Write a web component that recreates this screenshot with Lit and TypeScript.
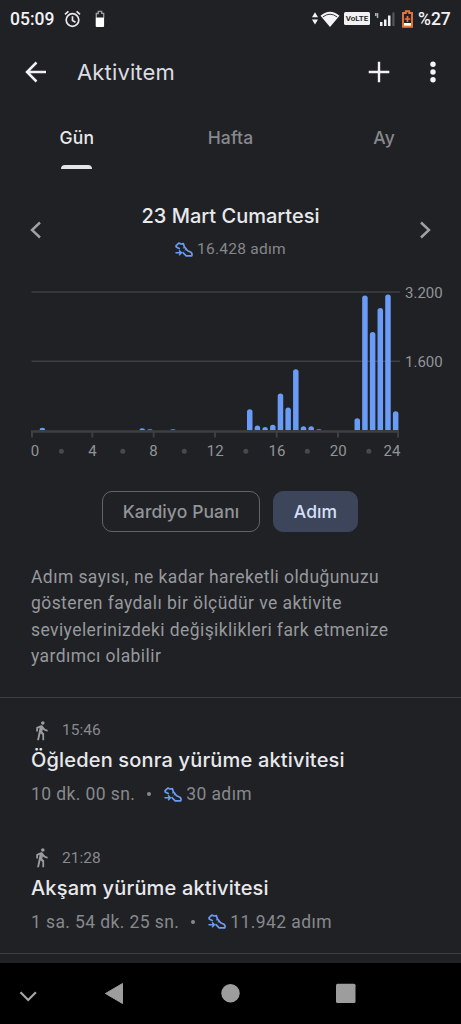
import { LitElement, html, css, svg } from "lit";
import { customElement, property } from "lit/decorators.js";

const stepsIcon = html`<svg viewBox="0 0 18 15" width="18" height="15" fill="none" stroke="#699bf7" stroke-width="1.7" stroke-linejoin="round" stroke-linecap="round">
  <path d="M4.200 6.600 1.200 5 1.100 3.600 3.800 1.100 6.200 2 8.400 1.700 9.400 4.900 12.600 8.800 15.900 10.200Q17.300 11.200 17 12.900L16.600 13.900H11.200L8 10.600"/>
  <path d="M1 10.800H6.200M4.500 8.900 6.400 10.800 4.500 12.700" stroke-width="1.500"/>
  <path d="M8.300 6 9.600 5.300M10 8 11.300 7.300" stroke-width="1"/>
</svg>`;

const walkIcon = html`<svg viewBox="0 0 24 24" width="21" height="21" fill="#9a9ca0"><path d="M13.500 5.500c1.100 0 2-.9 2-2s-.9-2-2-2-2 .9-2 2 .9 2 2 2zM9.800 8.900 7 23h2.100l1.800-8 2.100 2v6h2v-7.500l-2.100-2 .6-3C14.800 12 16.800 13 19 13v-2c-1.900 0-3.500-1-4.300-2.400l-1-1.600c-.4-.6-1-1-1.700-1-.3 0-.5.1-.8.1L6 8.300V13h2V9.600l1.800-.7"/></svg>`;

@customElement("status-bar")
class StatusBar extends LitElement {
  static styles = css`
    :host { display: flex; align-items: center; height: 37px; padding: 0 10px; color: #f2f2f4; font: 500 17.5px Roboto, sans-serif; }
    .time { width: 46px; white-space: nowrap; }
    .alarm { margin-left: 8px; }
    .cell { margin-left: 14px; }
    .grow { flex: 1; }
    .volte { width: 26px; height: 13px; margin: 0 5px 0 4px; border-radius: 1.5px; background: #f2f2f4; color: #222; font: 600 8px/13px Roboto, sans-serif; text-align: center; }
    .low { margin: 0 5px 0 7px; }
    .pct { width: 33px; white-space: nowrap; }
  `;
  render() {
    return html`
      <span class="time">05:09</span>
      <svg class="alarm" width="17" height="18" viewBox="0 0 17 18" fill="none" stroke="#e8e8ea" stroke-width="1.700"><circle cx="8.500" cy="10" r="6.300"/><path d="M8.500 6.200v4.300l3 1.700M1 4.400 4.400 1.300M16 4.400 12.600 1.300"/></svg>
      <svg class="cell" width="10" height="18" viewBox="0 0 10 18"><path d="M1.300 8V3.500h2V1.300h3.400v2h2V8" fill="none" stroke="#a0a0a2" stroke-width="1.300"/><rect x=".7" y="7.500" width="8.400" height="9.500" rx="1" fill="#fff"/></svg>
      <span class="grow"></span>
      <svg width="28" height="18" viewBox="0 0 28 18" fill="#f4f4f6"><path d="M0 7.200 3 2.200 6 7.200zM0 9.600h6L3 14.600z"/><path d="M8.500 5.800Q18 -2.400 27.500 5.800L18 17z"/><path d="M10.800 7Q18 1.400 25.200 7" fill="none" stroke="#3a3b40" stroke-width="1"/></svg>
      <span class="volte">VoLTE</span>
      <svg width="20" height="16" viewBox="0 0 20 16" fill="#f0f0f2"><path d="M0 2h1.500v3H0zM1.800 2h1.500v5H1.800z" opacity=".7"/><rect x="5" y="11" width="2.500" height="4"/><rect x="9" y="8.500" width="2.500" height="6.500"/><rect x="13" y="4.500" width="2.500" height="10.500"/><rect x="17.300" y="1.500" width="2.200" height="13.500" fill="#55565a"/></svg>
      <svg class="low" width="11" height="18" viewBox="0 0 11 18"><path d="M1 3h2.800V1.200h3.400V3H10v13.800H1z" fill="none" stroke="#e8743c" stroke-width="1.900"/><path d="M5.500 6v6M2.700 9h5.600" stroke="#e8743c" stroke-width="1.700"/><path d="M2 13h7v2.800H2z" fill="#fff"/></svg>
      <span class="pct">%27</span>`;
  }
}

@customElement("app-bar")
class AppBar extends LitElement {
  static styles = css`
    :host { display: flex; align-items: center; height: 70px; padding: 0 25px; }
    .title { flex: 1; margin-left: 30px; color: #dcdde0; font: 400 22px Inter, sans-serif; letter-spacing: .15px; }
    .plus { margin-right: 40px; }
  `;
  render() {
    return html`
      <svg width="22" height="22" viewBox="0 0 22 22" fill="none" stroke="#f1f1f3" stroke-width="2.500"><path d="M21 11H2.500M11.500 1.500 2 11l9.500 9.500"/></svg>
      <span class="title">Aktivitem</span>
      <svg class="plus" width="22" height="22" viewBox="0 0 22 22" stroke="#f1f1f3" stroke-width="2.400"><path d="M11 .7v20.600M.7 11h20.600"/></svg>
      <svg width="6" height="22" viewBox="0 0 6 22" fill="#f5f5f7"><circle cx="3" cy="3.200" r="2.700"/><circle cx="3" cy="11" r="2.700"/><circle cx="3" cy="18.800" r="2.700"/></svg>`;
  }
}

@customElement("range-tabs")
class RangeTabs extends LitElement {
  static styles = css`
    :host { display: grid; grid-template-columns: 1fr 1fr 1fr; height: 62px; color: #87898d; font: 500 17.5px/62px Inter, sans-serif; text-align: center; letter-spacing: .15px; }
    .tab { display: flex; flex-direction: column; align-items: center; height: 62px; }
    .label { height: 58px; }
    .on { color: #e8e9ec; }
    .mark { width: 31px; height: 4px; border-radius: 4px 4px 0 0; background: #e3e4e8; }
  `;
  render() {
    return html`
      <div class="tab on"><span class="label">Gün</span><span class="mark"></span></div>
      <div class="tab"><span class="label">Hafta</span></div>
      <div class="tab"><span class="label">Ay</span></div>`;
  }
}

@customElement("day-picker")
class DayPicker extends LitElement {
  static styles = css`
    :host { display: flex; align-items: center; justify-content: space-between; height: 62px; padding: 0 29px; margin-top: 30px; }
    .mid { display: flex; flex-direction: column; align-items: center; padding-top: 5px; }
    .day { height: 33px; color: #e8e9ec; font: 500 20px/28px Inter, sans-serif; white-space: nowrap; }
    .sum { display: flex; align-items: center; gap: 4px; height: 28px; color: #85878b; font: 400 15.5px/28px Roboto, sans-serif; letter-spacing: .25px; }
  `;
  render() {
    return html`
      <svg width="14" height="18" viewBox="0 0 14 18" fill="none" stroke="#a0a1a5" stroke-width="2.400"><path d="M11 1.500 3 9l8 7.500"/></svg>
      <div class="mid"><span class="day">23 Mart Cumartesi</span><span class="sum">${stepsIcon}<span>16.428 adım</span></span></div>
      <svg width="14" height="18" viewBox="0 0 14 18" fill="none" stroke="#a0a1a5" stroke-width="2.400"><path d="M3 1.500 11 9l-8 7.500"/></svg>`;
  }
}

// Each pair is a half-hour slot and the height of its bar.
const bars: [number, number][] = [
  [1, 2.4], [14, 2], [15, 1], [18, 1], [28, 21], [29, 4.8], [30, 3.2], [31, 5.4], [32, 36.8], [33, 22.8],
  [34, 61], [35, 4], [36, 4], [37, 1], [42, 12], [43, 134.7], [44, 98.3], [45, 122.3], [46, 135.7], [47, 19],
];
// Hour label, its centre, and the position of its tick.
const hours: [string, number, number][] = [
  ["0", 35, 32], ["4", 92.5, 92.3], ["8", 153.5, 153.7], ["12", 215.3, 215], ["16", 277, 276.7], ["20", 338.3, 338], ["24", 392, 398],
];
const dots = [61.4, 122.8, 184.3, 245.8, 307.3, 368.8];

@customElement("steps-chart")
class StepsChart extends LitElement {
  static styles = css`
    :host { display: block; height: 190px; margin-top: 19px; }
    svg { display: block; }
    text { font: 400 15px Roboto, sans-serif; fill: #929498; }
    .hour { text-anchor: middle; }
  `;
  render() {
    return html`<svg width="461" height="190" viewBox="0 280 461 190">
      <path d="M31.500 292H400M31.500 361.300H400" stroke="#3d3f43" stroke-width="1.500"/>
      ${bars.map(([i, h]) => {
        const x = 34.7 + 7.68 * i - 2.75;
        const r = Math.min(2.6, h);
        return svg`<path d="M${x} 430.200v${r - h}q0 ${-r} 2.750 ${-r}t2.750 ${r}v${h - r}z" fill="#699bf7"/>`;
      })}
      <path d="M31 431.500H399" stroke="#3d3f43" stroke-width="2.600"/>
      ${hours.map(([t, x, tick]) => svg`<path d="M${tick} 431v6.500" stroke="#3d3f43" stroke-width="2"/><text class="hour" x=${x} y="456.300">${t}</text>`)}
      ${dots.map((x) => svg`<circle cx=${x} cy="451.200" r="2.500" fill="#47494d"/>`)}
      <text x="405" y="297.700">3.200</text><text x="405" y="367">1.600</text>
    </svg>`;
  }
}

@customElement("activity-entry")
class ActivityEntry extends LitElement {
  @property() time = "";
  @property() name = "";
  @property() duration = "";
  @property() steps = "";
  static styles = css`
    :host { display: block; height: 127.5px; padding: 0 31px; box-sizing: border-box; white-space: nowrap; }
    .top { display: flex; align-items: center; height: 30px; gap: 10px; color: #87898d; font: 400 15.5px Roboto, sans-serif; }
    .name { color: #e8e9ec; font: 500 20px/30px Inter, sans-serif; letter-spacing: .17px; }
    .meta { display: flex; align-items: center; margin-top: 4px; height: 30px; color: #87898d; font: 400 17.5px/30px Roboto, sans-serif; letter-spacing: .4px; }
    .dot { width: 4px; height: 4px; border-radius: 50%; background: #87898d; margin: 0 13px 0 12px; }
    .count { margin-left: 4px; }
  `;
  render() {
    return html`
      <div class="top">${walkIcon}<span>${this.time}</span></div>
      <div class="name">${this.name}</div>
      <div class="meta"><span>${this.duration}</span><span class="dot"></span>${stepsIcon}<span class="count">${this.steps}</span></div>`;
  }
}

@customElement("app-root")
class AppRoot extends LitElement {
  static styles = css`
    :host { display: flex; flex-direction: column; width: 461px; height: 1024px; overflow: hidden; background: #202125; }
    .chips { display: flex; gap: 13px; margin: 21px 0 0 102px; height: 41px; }
    .chip { box-sizing: border-box; width: 158px; border: 1.5px solid #626468; border-radius: 10px; color: #929498; font: 500 17.5px/40px Inter, sans-serif; letter-spacing: .1px; text-align: center; white-space: nowrap; }
    .sel { width: 85px; border-color: #3d455b; background: #3d455b; color: #d5e0f8; }
    .info { height: 133px; margin-top: 32px; padding-left: 31px; color: #97999d; font: 400 17.5px/26.3px Roboto, sans-serif; letter-spacing: .42px; white-space: nowrap; }
    .list { flex: none; height: 238px; padding-top: 17px; border: solid #3d3f43; border-width: 1.5px 0; }
    .nav { margin-top: auto; height: 61px; background: #000; flex: none; }
  `;
  render() {
    return html`
      <status-bar></status-bar><app-bar></app-bar><range-tabs></range-tabs>
      <day-picker></day-picker><steps-chart></steps-chart>
      <div class="chips"><span class="chip">Kardiyo Puanı</span><span class="chip sel">Adım</span></div>
      <div class="info">Adım sayısı, ne kadar hareketli olduğunuzu<br>gösteren faydalı bir ölçüdür ve aktivite<br>seviyelerinizdeki değişiklikleri fark etmenize<br>yardımcı olabilir</div>
      <div class="list">
        <activity-entry time="15:46" name="Öğleden sonra yürüme aktivitesi" duration="10 dk. 00 sn." steps="30 adım"></activity-entry>
        <activity-entry time="21:28" name="Akşam yürüme aktivitesi" duration="1 sa. 54 dk. 25 sn." steps="11.942 adım"></activity-entry>
      </div>
      <svg class="nav" width="461" height="61" viewBox="0 963 461 61" fill="#9d9d9d"><path d="M20.500 992.300l7.700 7.700 7.700-7.700" fill="none" stroke="#a6a6a6" stroke-width="2.200"/><path d="M105.500 993.500 122.500 983.500v20z" stroke="#9d9d9d" stroke-linejoin="round"/><circle cx="230.500" cy="993.300" r="9.200"/><rect x="336" y="983.700" width="19.500" height="19.300" rx="1.500"/></svg>`;
  }
}
